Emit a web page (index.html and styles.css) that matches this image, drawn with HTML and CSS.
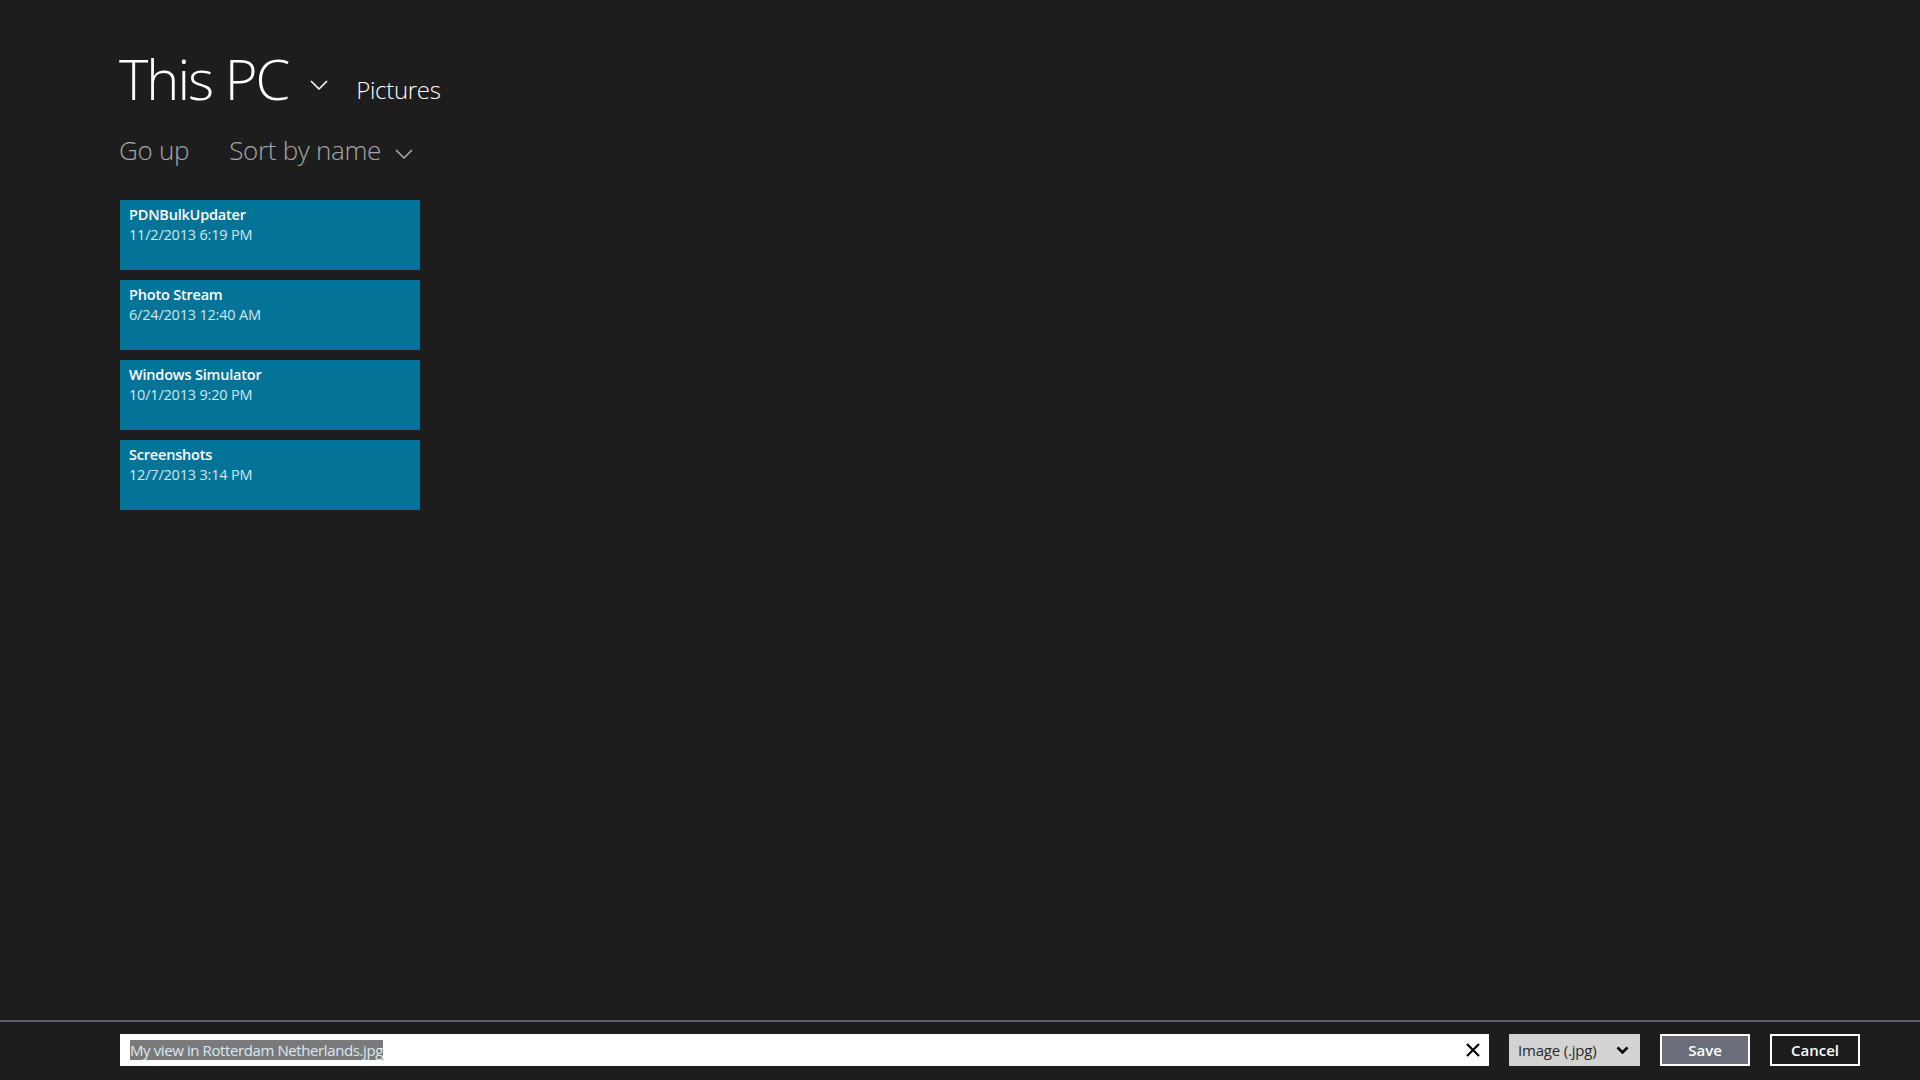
FILE: index.html
```html
<!DOCTYPE html>
<html>
<head>
<meta charset="utf-8">
<link rel="stylesheet" href="styles.css">
</head>
<body>
<div class="page">
  <header class="header">
    <div class="title-row">
      <h1 class="title">This PC</h1>
      <svg class="title-chev" width="18" height="10" viewBox="0 0 18 10"><path d="M1 1 L9 9 L17 1" fill="none" stroke="#ffffff" stroke-width="1.6"/></svg>
      <span class="crumb">Pictures</span>
    </div>
    <div class="cmd-row">
      <span class="cmd">Go up</span>
      <span class="cmd sort">Sort by name
        <svg class="sort-chev" width="18" height="10" viewBox="0 0 18 10"><path d="M1 1 L9 9 L17 1" fill="none" stroke="#a6a6a6" stroke-width="1.6"/></svg>
      </span>
    </div>
  </header>
  <main class="tiles">
    <div class="tile"><div class="tile-name">PDNBulkUpdater</div><div class="tile-date">11/2/2013 6:19 PM</div></div>
    <div class="tile"><div class="tile-name">Photo Stream</div><div class="tile-date">6/24/2013 12:40 AM</div></div>
    <div class="tile"><div class="tile-name">Windows Simulator</div><div class="tile-date">10/1/2013 9:20 PM</div></div>
    <div class="tile"><div class="tile-name">Screenshots</div><div class="tile-date">12/7/2013 3:14 PM</div></div>
  </main>
  <footer class="bar">
    <div class="name-box">
      <span class="name-sel">My view in Rotterdam Netherlands.jpg</span>
      <svg class="clear" width="14" height="14" viewBox="0 0 14 14"><path d="M1 1 L13 13 M13 1 L1 13" stroke="#000" stroke-width="2.2"/></svg>
    </div>
    <div class="type-select">
      <span>Image (.jpg)</span>
      <svg width="13" height="9" viewBox="0 0 13 9"><path d="M1.5 1.5 L6.5 6.5 L11.5 1.5" fill="none" stroke="#000" stroke-width="2.6"/></svg>
    </div>
    <button class="btn save">Save</button>
    <button class="btn cancel">Cancel</button>
  </footer>
</div>
</body>
</html>
```
FILE: styles.css
```css
html, body {
  margin: 0;
  padding: 0;
  background: #1d1d1d;
  width: 1920px;
  height: 1080px;
  overflow: hidden;
}
.page {
  position: relative;
  width: 1920px;
  height: 1080px;
  font-family: "Open Sans", "Noto Sans", "Liberation Sans", sans-serif;
  color: #fff;
  display: flex;
  flex-direction: column;
}
.header {
  padding: 42px 0 0 119px;
}
.title-row {
  display: flex;
  align-items: baseline;
  height: 72px;
}
.title {
  margin: 0;
  font-size: 56px;
  font-weight: 300;
  line-height: 72px;
  letter-spacing: -2px;
  color: #fff;
}
.title-chev {
  margin-left: 22px;
  align-self: center;
  position: relative;
  top: 7px;
}
.crumb {
  margin-left: 28px;
  font-size: 24px;
  font-weight: 300;
  letter-spacing: -0.3px;
  color: #fff;
  position: relative;
  top: -1px;
}
.cmd-row {
  display: flex;
  align-items: center;
  margin-top: 16px;
  height: 40px;
}
.cmd {
  font-size: 26px;
  font-weight: 300;
  color: #a6a6a6;
  letter-spacing: -0.3px;
}
.sort {
  margin-left: 40px;
  display: flex;
  align-items: center;
}
.sort-chev {
  margin-left: 14px;
  position: relative;
  top: 4px;
}
.tiles {
  margin: 30px 0 0 120px;
  display: flex;
  flex-direction: column;
  gap: 10px;
  flex: 1;
}
.tile {
  width: 300px;
  height: 70px;
  background: #047398;
  box-sizing: border-box;
  padding: 5px 0 0 9px;
}
.tile-name {
  font-size: 14.5px;
  font-weight: 600;
  color: #fff;
  line-height: 20px;
  letter-spacing: -0.2px;
}
.tile-date {
  font-size: 14.5px;
  font-weight: 400;
  color: #d6e6ee;
  line-height: 20px;
  letter-spacing: -0.2px;
}
.bar {
  height: 60px;
  border-top: 2px solid #625e72;
  box-sizing: border-box;
  display: flex;
  align-items: flex-start;
  padding: 12px 0 0 120px;
}
.name-box {
  width: 1369px;
  height: 32px;
  background: #fff;
  box-sizing: border-box;
  display: flex;
  align-items: center;
  padding: 0 9px 0 10px;
  justify-content: space-between;
}
.name-sel {
  background: #7a7a7a;
  color: #dbe8f3;
  font-size: 15px;
  line-height: 20px;
  letter-spacing: -0.4px;
}
.type-select {
  margin-left: 20px;
  width: 131px;
  height: 32px;
  background: #d3d3d3;
  box-sizing: border-box;
  display: flex;
  align-items: center;
  justify-content: space-between;
  padding: 0 11px 0 9px;
  color: #2a2a2a;
  font-size: 15px;
  letter-spacing: -0.2px;
}
.btn {
  margin-left: 20px;
  width: 90px;
  height: 32px;
  border: 2px solid #fff;
  box-sizing: border-box;
  font-family: "Open Sans", "Noto Sans", "Liberation Sans", sans-serif;
  font-size: 15px;
  font-weight: 600;
  color: #fff;
  padding: 0;
}
.save {
  background: #6b6e78;
}
.cancel {
  background: #1d1d1d;
}
```
